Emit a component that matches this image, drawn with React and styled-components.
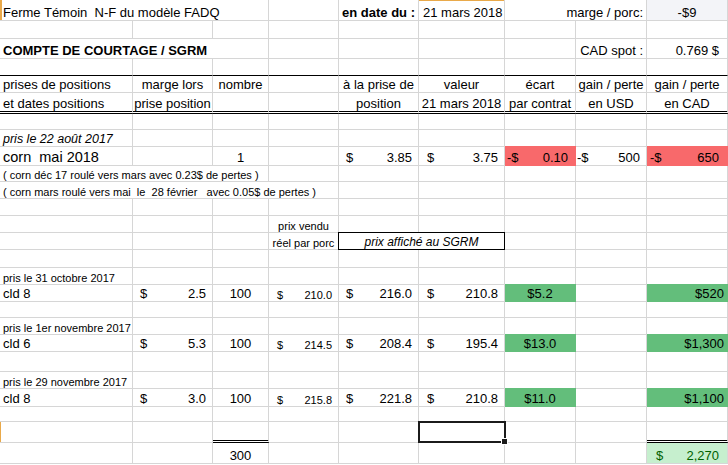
import React from "react";
import styled, { createGlobalStyle } from "styled-components";

const GlobalStyle = createGlobalStyle`
  html, body {
    margin: 0;
    padding: 0;
    background: #fff;
  }
  body {
    font-family: "Liberation Sans", Arial, sans-serif;
    color: #000;
  }
`;

const GRID = "#d6d6d6";
const MARK = "#e9a94a";
const RED = "#f8696b";
const GREEN = "#63be7b";
const PALE_GREEN = "#c6efce";
const DARK_GREEN = "#006100";

const ROW_HEIGHTS = [
  21, 18, 20, 17, 17, 21, 16, 17, 19, 16, 17, 17, 17, 17, 18, 17, 17, 16, 17,
  17, 20, 17, 18, 15, 21, 21,
];

const JUSTIFY = {
  left: "flex-start",
  center: "center",
  right: "flex-end",
  between: "space-between",
};

const RULES = {
  solid: "1px solid #000",
  double: "3px double #000",
};

const MARKS = {
  left: `inset 1px 0 0 ${MARK}`,
  wide: `inset 2px 0 0 ${MARK}`,
  top: `inset 0 1px 0 ${MARK}`,
};

const Sheet = styled.div`
  display: grid;
  grid-template-columns: 133px 80px 56px 70px 80px 86px 71px 71px 81px;
  grid-template-rows: ${ROW_HEIGHTS.map((h) => `${h}px`).join(" ")};
  width: 728px;
  overflow: hidden;
`;

const Cell = styled.div`
  position: relative;
  box-sizing: border-box;
  min-width: 0;
  grid-column: span ${(p) => p.$span || 1};
  display: flex;
  align-items: flex-end;
  justify-content: ${(p) => JUSTIFY[p.$align || "left"]};
  padding: 0 ${(p) => p.$padR ?? 3}px 0 ${(p) => p.$padL ?? 3}px;
  margin-top: ${(p) => (p.$cover ? "-1px" : "0")};
  border-right: 1px solid ${(p) => (p.$cover ? p.$fill : GRID)};
  border-bottom: ${(p) =>
    RULES[p.$rule] || `1px solid ${p.$cover ? p.$fill : GRID}`};
  background: ${(p) => p.$fill || "transparent"};
  box-shadow: ${(p) => MARKS[p.$mark] || "none"};
  color: ${(p) => p.$ink || "#000"};
  font-size: ${(p) => p.$size || 13}px;
  font-weight: ${(p) => (p.$bold ? 700 : 400)};
  font-style: ${(p) => (p.$italic ? "italic" : "normal")};
  line-height: normal;
  white-space: pre;
`;

const NoteBox = styled.div`
  position: relative;
  grid-column: span 2;
  box-sizing: border-box;
  margin: -1px 0 0 -1px;
  border: 1px solid #000;
  display: flex;
  align-items: flex-end;
  justify-content: center;
  font-size: 12px;
  font-style: italic;
  line-height: normal;
  white-space: nowrap;
`;

const SelectionFrame = styled.div`
  position: absolute;
  top: -1px;
  left: -1px;
  right: -2px;
  bottom: -1px;
  border: 2px solid #1b1b1b;
  z-index: 2;
`;

const FillHandle = styled.div`
  position: absolute;
  right: -4px;
  bottom: -4px;
  width: 5px;
  height: 5px;
  background: #1b1b1b;
  border: 1px solid #fff;
`;

const Blanks = ({ n, ...rest }) =>
  Array.from({ length: n }, (_, i) => <Cell key={i} {...rest} />);

const Money = ({ sign = "$", value, padL = 7, padR = 6, ...rest }) => (
  <Cell $align="between" $padL={padL} $padR={padR} {...rest}>
    <span>{sign}</span>
    <span>{value}</span>
  </Cell>
);

const trades = [
  {
    date: "pris le 31 octobre 2017",
    name: "cld 8",
    margin: "2.5",
    qty: "100",
    sold: "210.0",
    entry: "216.0",
    value: "210.8",
    spread: "$5.2",
    cad: "$520",
  },
  {
    date: "pris le 1er novembre 2017",
    name: "cld 6",
    margin: "5.3",
    qty: "100",
    sold: "214.5",
    entry: "208.4",
    value: "195.4",
    spread: "$13.0",
    cad: "$1,300",
  },
  {
    date: "pris le 29 novembre 2017",
    name: "cld 8",
    margin: "3.0",
    qty: "100",
    sold: "215.8",
    entry: "221.8",
    value: "210.8",
    spread: "$11.0",
    cad: "$1,100",
  },
];

const TradeRows = ({ trade }) => (
  <>
    <Cell $size={11}>{trade.date}</Cell>
    <Blanks n={8} />

    <Cell>{trade.name}</Cell>
    <Money value={trade.margin} />
    <Cell $align="center">{trade.qty}</Cell>
    <Money value={trade.sold} $size={11} padL={8} />
    <Money value={trade.entry} />
    <Money value={trade.value} padL={8} />
    <Cell $align="center" $fill={GREEN} $cover>
      {trade.spread}
    </Cell>
    <Cell />
    <Cell $align="right" $padR={3} $fill={GREEN} $cover>
      {trade.cad}
    </Cell>

    <Blanks n={9} />
  </>
);

export default function App() {
  return (
    <>
      <GlobalStyle />
      <Sheet>
        {/* title */}
        <Cell $span={3} $mark="wide">
          Ferme Témoin  N-F du modèle FADQ
        </Cell>
        <Cell />
        <Cell $align="right" $bold $padR={3}>
          en date du :
        </Cell>
        <Cell $padL={4} $mark="top">
          21 mars 2018
        </Cell>
        <Cell $span={2} $align="right">
          marge / porc:
        </Cell>
        <Cell $align="center" $fill="#f3f4f8">
          -$9
        </Cell>

        <Blanks n={9} />

        <Cell $span={3} $bold>
          COMPTE DE COURTAGE / SGRM
        </Cell>
        <Blanks n={4} />
        <Cell $align="right">CAD spot :</Cell>
        <Cell $align="right" $padR={8}>
          0.769 $
        </Cell>

        <Blanks n={9} $rule="solid" />

        {/* column headers */}
        <Cell>prises de positions</Cell>
        <Cell $align="center">marge lors</Cell>
        <Cell $align="center">nombre</Cell>
        <Cell />
        <Cell $align="center">à la prise de</Cell>
        <Cell $align="center">valeur</Cell>
        <Cell $align="center">écart</Cell>
        <Cell $align="center">gain / perte</Cell>
        <Cell $align="center">gain / perte</Cell>

        <Cell $rule="double">et dates positions</Cell>
        <Cell $rule="double" $align="center">
          prise position
        </Cell>
        <Cell $rule="double" />
        <Cell $rule="double" />
        <Cell $rule="double" $align="center">
          position
        </Cell>
        <Cell $rule="double" $align="center">
          21 mars 2018
        </Cell>
        <Cell $rule="double" $align="center">
          par contrat
        </Cell>
        <Cell $rule="double" $align="center">
          en USD
        </Cell>
        <Cell $rule="double" $align="center">
          en CAD
        </Cell>

        <Blanks n={9} />

        {/* corn */}
        <Cell $italic $size={12.5}>
          pris le 22 août 2017
        </Cell>
        <Blanks n={8} />

        <Cell $size={14.5}>corn  mai 2018</Cell>
        <Cell />
        <Cell $align="center">1</Cell>
        <Cell />
        <Money value="3.85" />
        <Money value="3.75" padL={8} />
        <Money sign="-$" value="0.10" padL={2} padR={7} $fill={RED} $cover />
        <Money sign="-$" value="500" padL={1} padR={6} />
        <Money sign="-$" value="650" padL={3} padR={8} $fill={RED} $cover />

        <Cell $span={3} $size={11}>
          ( corn déc 17 roulé vers mars avec 0.23$ de pertes )
        </Cell>
        <Blanks n={6} />

        <Cell $span={4} $size={11}>
          ( corn mars roulé vers mai  le  28 février   avec 0.05$ de pertes )
        </Cell>
        <Blanks n={5} />

        <Blanks n={9} />

        {/* hog price note */}
        <Blanks n={3} />
        <Cell $align="center" $size={11}>
          prix vendu
        </Cell>
        <Blanks n={5} />

        <Blanks n={3} />
        <Cell $align="center" $size={11} $padL={0} $padR={0}>
          réel par porc
        </Cell>
        <NoteBox>prix affiché au SGRM</NoteBox>
        <Blanks n={3} />

        <Blanks n={9} />

        {trades.map((t) => (
          <TradeRows key={t.date} trade={t} />
        ))}

        {/* totals */}
        <Cell $mark="left" />
        <Cell />
        <Cell $rule="double" />
        <Cell />
        <Cell />
        <Cell>
          <SelectionFrame>
            <FillHandle />
          </SelectionFrame>
        </Cell>
        <Cell />
        <Cell />
        <Cell $rule="double" />

        <Cell />
        <Cell />
        <Cell $align="center">300</Cell>
        <Cell />
        <Cell />
        <Cell />
        <Cell />
        <Cell />
        <Money
          value="2,270"
          padL={9}
          padR={8}
          $fill={PALE_GREEN}
          $ink={DARK_GREEN}
        />
      </Sheet>
    </>
  );
}
